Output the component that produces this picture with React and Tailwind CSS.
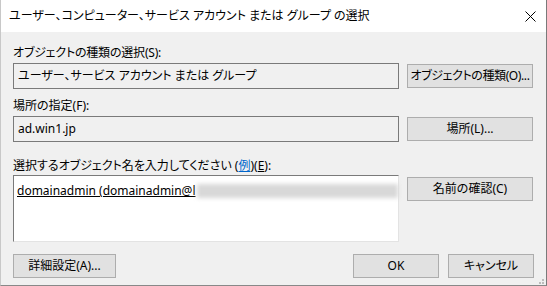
import React from "react";

const font = "font-['Noto_Sans','Noto_Sans_CJK_JP',sans-serif] [font-feature-settings:'palt']";

function Btn({ children, className = "" }) {
  return (
    <div
      className={
        "flex h-[24px] shrink-0 items-center justify-center whitespace-nowrap border border-[#adadad] bg-[#e1e1e1] text-[12px] text-black " +
        className
      }
    >
      {children}
    </div>
  );
}

function CloseIcon() {
  return (
    <svg width="11" height="11" viewBox="0 0 11 11">
      <path d="M0.5 0.5 L10.5 10.5 M10.5 0.5 L0.5 10.5" stroke="#000" strokeWidth="1" />
    </svg>
  );
}

function Grip() {
  const dots = [
    [6, 0],
    [3, 3],
    [6, 3],
    [0, 6],
    [3, 6],
    [6, 6],
  ];
  return (
    <svg width="8" height="8" viewBox="0 0 8 8">
      {dots.map(([x, y]) => (
        <rect key={x + "-" + y} x={x} y={y} width="2" height="2" fill="#bcbcbc" />
      ))}
    </svg>
  );
}

export default function App() {
  return (
    <div className={"flex h-[286px] w-[547px] flex-col overflow-hidden border-b border-l border-r border-b-[#888] border-l-[#c8c8c8] border-r-[#7a7a7a] bg-[#f0f0f0] text-black " + font}>
      {/* title bar */}
      <div className="flex h-[32px] shrink-0 items-center justify-between bg-white pl-[8px] pr-[10px]">
        <span className="text-[12px] leading-none">
          ユーザー、コンピューター、サービス アカウント または グループ の選択
        </span>
        <CloseIcon />
      </div>

      {/* body */}
      <div className="flex flex-1 flex-col px-[12px] pt-[13px]">
        <div className="h-[16px] text-[12px] leading-[16px] tracking-[-0.2px]">オブジェクトの種類の選択(S):</div>
        <div className="mt-[2px] flex items-center gap-[8px]">
          <div className="flex h-[26px] w-[386px] shrink-0 items-center border border-[#7a7a7a] px-[4px] text-[12px]">
            ユーザー、サービス アカウント または グループ
          </div>
          <Btn className="w-[126px] tracking-[-0.4px]">オブジェクトの種類(O)...</Btn>
        </div>

        <div className="mt-[9px] h-[16px] text-[12px] leading-[16px]">場所の指定(F):</div>
        <div className="mt-[2px] flex items-center gap-[8px]">
          <div className="flex h-[26px] w-[386px] shrink-0 items-center border border-[#7a7a7a] px-[4px] text-[12px]">
            ad.win1.jp
          </div>
          <Btn className="w-[126px]">場所(L)...</Btn>
        </div>

        <div className="mt-[16px] h-[16px] text-[12px] leading-[16px]">
          選択するオブジェクト名を入力してください (
          <span className="text-[#0066cc] underline">例</span>)(<span className="underline">E</span>):
        </div>
        <div className="mt-[1px] flex items-start gap-[8px]">
          <div className="h-[67px] w-[386px] shrink-0 border border-t-[#7a7a7a] border-l-[#7a7a7a] border-r-[#e3e3e3] border-b-[#e3e3e3] bg-white pt-[7px] pl-[3px]">
            <div className="flex items-center text-[12px] leading-[16px]">
              <span className="underline">domainadmin (domainadmin@l</span>
              <div className="ml-[1px] h-[14px] flex-1 bg-[#d8d8d8] blur-[2px]" />
            </div>
          </div>
          <Btn className="mt-[2px] w-[126px]">名前の確認(C)</Btn>
        </div>

        <div className="mt-[12px] flex items-center">
          <Btn className="w-[103px]">詳細設定(A)...</Btn>
          <div className="flex-1" />
          <Btn className="w-[86px]">OK</Btn>
          <Btn className="ml-[9px] w-[86px]">キャンセル</Btn>
        </div>
        <div className="flex justify-end">
          <div className="-mr-[10px] mt-[1px]">
            <Grip />
          </div>
        </div>
      </div>
    </div>
  );
}
